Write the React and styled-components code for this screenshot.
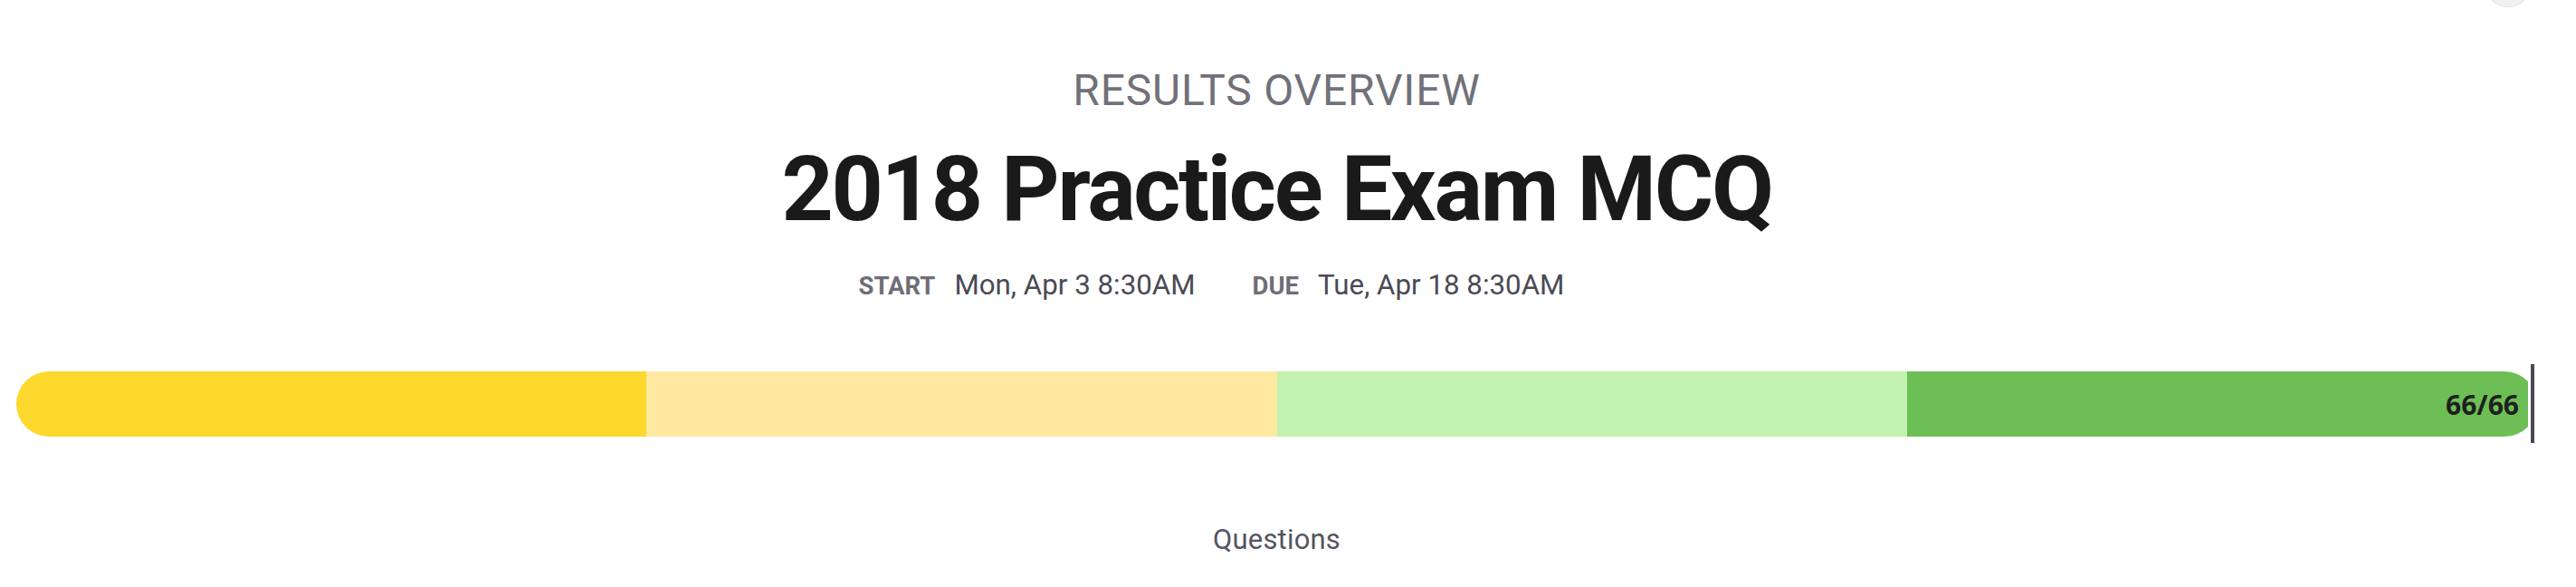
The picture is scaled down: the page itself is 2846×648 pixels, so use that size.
import React from 'react'
import styled, { createGlobalStyle } from 'styled-components'

const GlobalStyle = createGlobalStyle`
  html, body {
    margin: 0;
    padding: 0;
    background: #ffffff;
  }
  body {
    font-family: Roboto, "Liberation Sans", sans-serif;
  }
`

const Page = styled.div`
  position: relative;
  width: 2846px;
  height: 648px;
  overflow: hidden;
  background: #fff;
`

const AvatarButton = styled.div`
  position: absolute;
  top: -44px;
  left: 2745px;
  width: 50px;
  height: 50px;
  border-radius: 50%;
  background: #f1f1f2;
  border: 1px solid #e0e0e2;
`

const Container = styled.div`
  width: 2785px;
  margin-left: 18px;
  padding-top: 72px;
  display: flex;
  flex-direction: column;
  align-items: center;
`

const Eyebrow = styled.div`
  font-size: 48px;
  line-height: 56px;
  font-weight: 400;
  letter-spacing: 0.8px;
  color: #717179;
  text-transform: uppercase;
`

const Title = styled.h1`
  margin: 26px 0 0;
  font-size: 100px;
  line-height: 110px;
  font-weight: 700;
  letter-spacing: -2.3px;
  color: #1a1a1a;
`

const Dates = styled.div`
  margin: 31px 144px 0 0;
  display: flex;
  align-items: baseline;
  gap: 63px;
  height: 40px;
  line-height: 40px;
`

const DateItem = styled.div`
  display: flex;
  align-items: baseline;
  gap: 21px;
`

const DateLabel = styled.span`
  font-size: 27.5px;
  font-weight: 700;
  color: #6e6e76;
  text-transform: uppercase;
`

const DateValue = styled.span`
  font-size: 31.3px;
  font-weight: 400;
  color: #4a4a55;
`

const BarWrap = styled.div`
  position: relative;
  margin-top: 75px;
  width: 100%;
`

const Bar = styled.div`
  display: flex;
  height: 72px;
  border-radius: 36px;
  overflow: hidden;
`

const Segment = styled.div`
  flex: 1;
  background: ${p => p.color};
  display: flex;
  align-items: center;
  justify-content: flex-end;
  padding-right: 20px;
  font-family: "Open Sans", "Noto Sans", sans-serif;
  font-size: 30px;
  font-weight: 700;
  color: #1f1f1f;
`

const Marker = styled.div`
  position: absolute;
  top: -8px;
  right: 0;
  width: 4px;
  height: 87px;
  background: #4a4a55;
  border-left: 3px solid #fff;
  border-right: 3px solid #fff;
`

const Caption = styled.div`
  margin-top: 96px;
  font-size: 31px;
  line-height: 36px;
  letter-spacing: 0.2px;
  color: #55555f;
`

const segments = ['#fdd82d', '#ffe9a1', '#c1f2b0', '#6dbf55']

export default function App() {
  return (
    <Page>
      <GlobalStyle />
      <AvatarButton />
      <Container>
        <Eyebrow>Results Overview</Eyebrow>
        <Title>2018 Practice Exam MCQ</Title>
        <Dates>
          <DateItem>
            <DateLabel>Start</DateLabel>
            <DateValue>Mon, Apr 3 8:30AM</DateValue>
          </DateItem>
          <DateItem>
            <DateLabel>Due</DateLabel>
            <DateValue>Tue, Apr 18 8:30AM</DateValue>
          </DateItem>
        </Dates>
        <BarWrap>
          <Bar>
            {segments.map((c, i) => (
              <Segment key={c} color={c}>
                {i === segments.length - 1 ? '66/66' : null}
              </Segment>
            ))}
          </Bar>
          <Marker />
        </BarWrap>
        <Caption>Questions</Caption>
      </Container>
    </Page>
  )
}
